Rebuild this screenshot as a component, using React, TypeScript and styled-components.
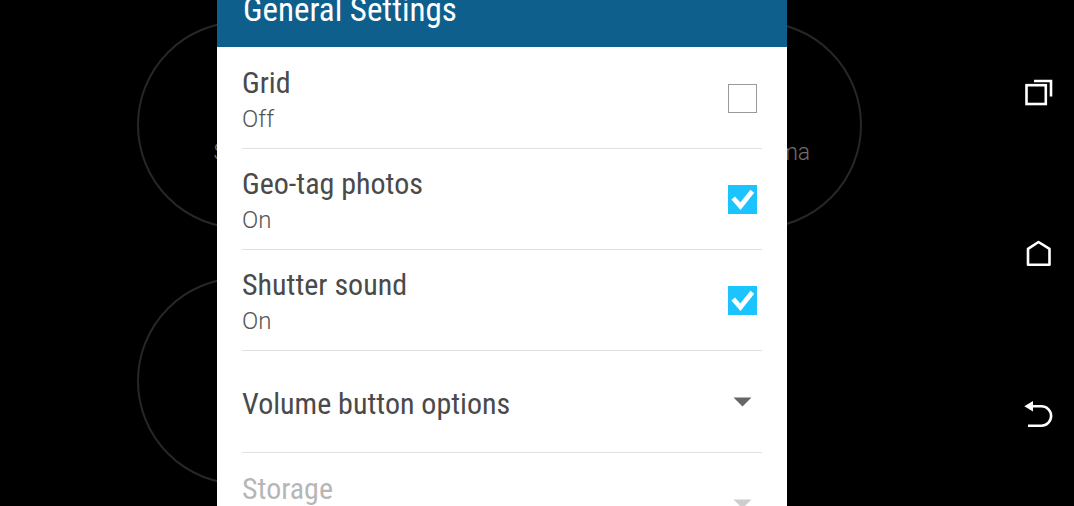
import React, { useState } from 'react';
import styled, { createGlobalStyle } from 'styled-components';

const GlobalStyle = createGlobalStyle`
  *, *::before, *::after { box-sizing: border-box; }
  body {
    margin: 0;
    background: #000;
    font-family: Roboto, "Liberation Sans", sans-serif;
  }
  button {
    border: 0;
    padding: 0;
    background: none;
    font: inherit;
    color: inherit;
  }
`;

const Screen = styled.div`
  display: flex;
  height: 100vh;
  overflow: hidden;
  background: #000;
`;

const Stage = styled.main`
  position: relative;
  flex: 1;
  min-width: 0;
`;

const ModeGrid = styled.div`
  display: grid;
  grid-template-columns: 208px 208px;
  justify-content: center;
  column-gap: 309px;
  row-gap: 48px;
  padding: 21px 5px 0 0;
`;

const Mode = styled.button`
  display: flex;
  align-items: center;
  justify-content: center;
  height: 208px;
  padding-top: 56px;
  border: 2px solid #272727;
  border-radius: 50%;
  color: #6e6e6e;
  font-size: 23px;
  font-weight: 300;
  line-height: 32px;
`;

const Dialog = styled.section`
  position: absolute;
  top: 0;
  bottom: 0;
  left: 50%;
  width: 570px;
  max-width: 100%;
  transform: translateX(-50%);
  overflow: hidden;
  background: #fff;
`;

const DialogHeader = styled.header`
  display: flex;
  align-items: flex-end;
  height: 47px;
  padding: 0 26px 18px;
  background: #0e5f8c;
`;

const condensed = '"Roboto Condensed", Roboto, "Liberation Sans", sans-serif';

const DialogTitle = styled.h1`
  margin: 0;
  color: #fff;
  font-family: ${condensed};
  font-size: 33px;
  font-weight: 400;
  line-height: 38px;
`;

const SettingList = styled.ul`
  margin: 0;
  padding: 1px 25px 0;
  list-style: none;
`;

const SettingItem = styled.li`
  border-bottom: 1px solid #e0e0e0;
`;

const CheckRow = styled.label`
  display: flex;
  align-items: center;
  justify-content: space-between;
  height: 100px;
  padding-right: 5px;
`;

const MenuRow = styled.button`
  display: flex;
  align-items: center;
  justify-content: space-between;
  width: 100%;
  height: 101px;
  padding-right: 10px;
  text-align: left;
  &:disabled { opacity: 0.4; }
  &:disabled svg { opacity: 0.8; }
`;

const SettingText = styled.span<{ $tall?: boolean }>`
  display: flex;
  flex-direction: column;
  min-height: ${(p) => (p.$tall ? '76px' : '0')};
  padding-top: 4px;
`;

const SettingName = styled.span`
  color: #4a4a4a;
  font-family: ${condensed};
  font-size: 30px;
  line-height: 38px;
`;

const SettingValue = styled.span`
  color: #555;
  font-size: 24px;
  font-weight: 300;
  line-height: 34px;
`;

const CheckCell = styled.span`
  display: grid;
  width: 29px;
  height: 29px;
  > * { grid-area: 1 / 1; }
`;

const CheckInput = styled.input`
  appearance: none;
  width: 29px;
  height: 29px;
  margin: 0;
  border: 1px solid #999;
  background: #fff;
  &:checked {
    border-color: #1cc4ff;
    background: #1cc4ff;
  }
`;

const CheckMark = styled.svg`
  z-index: 1;
  width: 29px;
  height: 29px;
  pointer-events: none;
`;

const Caret = styled.svg`
  width: 19px;
  height: 10px;
  fill: #666;
`;

const NavBar = styled.nav`
  display: flex;
  flex-direction: column;
  justify-content: space-around;
  align-items: center;
  width: 70px;
  padding: 13px 0;
`;

const NavButton = styled.button`
  display: flex;
  padding: 8px;
`;

const NavIcon = styled.svg`
  width: 32px;
  height: 32px;
  fill: none;
  stroke: #fff;
  stroke-width: 2.6;
`;

function CheckSetting({ name, initial }: { name: string; initial: boolean }) {
  const [on, setOn] = useState(initial);
  return (
    <SettingItem>
      <CheckRow>
        <SettingText>
          <SettingName>{name}</SettingName>
          <SettingValue>{on ? 'On' : 'Off'}</SettingValue>
        </SettingText>
        <CheckCell>
          <CheckInput type="checkbox" checked={on} onChange={() => setOn(!on)} />
          {on && (
            <CheckMark viewBox="0 0 29 29" aria-hidden="true">
              <path d="M5.2 13L12.4 21.2L24.3 6.2" fill="none" stroke="#fff" strokeWidth="4.8" />
            </CheckMark>
          )}
        </CheckCell>
      </CheckRow>
    </SettingItem>
  );
}

function MenuSetting({ name, tall, disabled }: { name: string; tall?: boolean; disabled?: boolean }) {
  return (
    <SettingItem>
      <MenuRow type="button" aria-haspopup="menu" disabled={disabled}>
        <SettingText $tall={tall}>
          <SettingName>{name}</SettingName>
        </SettingText>
        <Caret viewBox="0 0 19 10" aria-hidden="true">
          <path d="M0.5 0.5H18.5L9.5 9.5Z" />
        </Caret>
      </MenuRow>
    </SettingItem>
  );
}

export default function App() {
  return (
    <>
      <GlobalStyle />
      <Screen>
        <Stage>
          <ModeGrid>
            <Mode type="button">Selfie</Mode>
            <Mode type="button">Panorama</Mode>
            <Mode type="button" aria-label="Camera mode" />
          </ModeGrid>
          <Dialog role="dialog" aria-labelledby="dialog-title">
            <DialogHeader>
              <DialogTitle id="dialog-title">General Settings</DialogTitle>
            </DialogHeader>
            <SettingList>
              <CheckSetting name="Grid" initial={false} />
              <CheckSetting name="Geo-tag photos" initial />
              <CheckSetting name="Shutter sound" initial />
              <MenuSetting name="Volume button options" />
              <MenuSetting name="Storage" tall disabled />
            </SettingList>
          </Dialog>
        </Stage>
        <NavBar aria-label="System">
          <NavButton type="button" aria-label="Recent apps">
            <NavIcon viewBox="0 0 32 32">
              <rect x="3.5" y="8.2" width="19.3" height="18.8" />
              <path d="M11 4H28V19.5" />
            </NavIcon>
          </NavButton>
          <NavButton type="button" aria-label="Home">
            <NavIcon viewBox="0 0 32 32" strokeLinejoin="round">
              <path d="M5 27.8V11.8L15.5 5L26.5 11.8V27.8Z" />
            </NavIcon>
          </NavButton>
          <NavButton type="button" aria-label="Back">
            <NavIcon viewBox="0 0 32 32">
              <path d="M9 9.3H18.4A9.7 9.7 0 0 1 18.4 28.7H5" />
              <path d="M1.3 9.3L10 4V14.6Z" fill="#fff" stroke="none" />
            </NavIcon>
          </NavButton>
        </NavBar>
      </Screen>
    </>
  );
}
